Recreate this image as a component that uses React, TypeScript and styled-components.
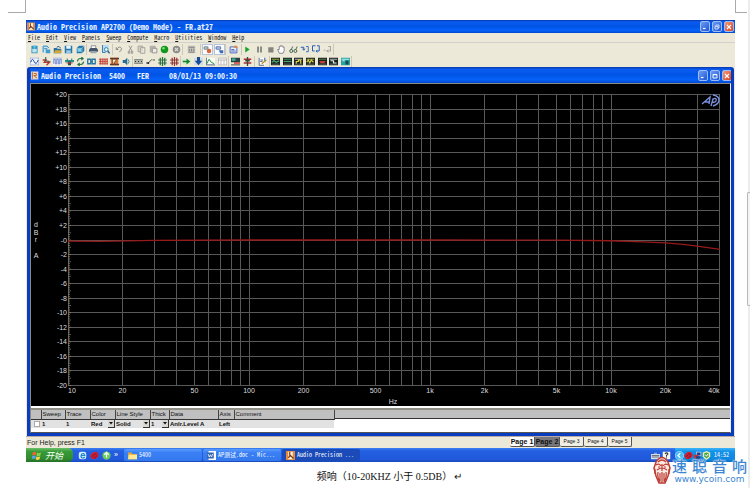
import React from "react";
import styled, { createGlobalStyle, css } from "styled-components";

const Global = createGlobalStyle`
  * { box-sizing: border-box; }
  body { margin: 0; background: #fff; font-family: "Liberation Sans", sans-serif; }
  button, select, input { font: inherit; color: inherit; margin: 0; padding: 0; border: 0; background: none; }
`;

const mono = `"Noto Sans Mono CJK SC", "Liberation Mono", monospace`;
const sans = `"Liberation Sans", "Noto Sans CJK SC", sans-serif`;

/* ---------- document page ---------- */

const Page = styled.div`
  display: grid;
  grid-template-columns: 1fr 3px;
  min-height: 100vh;
`;
const Sheet = styled.main`
  display: flex;
  flex-direction: column;
`;
const Margins = styled.div`
  display: flex;
  justify-content: space-between;
  height: 20px;
  padding-left: 8px;
`;
const Corner = styled.div<{ $side: "left" | "right" }>`
  width: ${(p) => (p.$side === "left" ? 18 : 12)}px;
  height: 13px;
  border-bottom: 1px solid #aaa;
  ${(p) => (p.$side === "left" ? "border-right" : "border-left")}: 1px solid #aaa;
`;
const Gutter = styled.div`
  border-right: 2px solid #ececec;
`;
const Thumb = styled.div`
  width: 3px;
  height: 114px;
  margin-top: 192px;
  border: 1px solid #b8b8b8;
  border-right: 0;
  border-radius: 2px 0 0 2px;
  background: #f4f4f4;
`;
const Figure = styled.figure`
  position: relative;
  margin: 0 12px 0 26px;
`;
const Caption = styled.figcaption`
  display: flex;
  justify-content: center;
  align-items: center;
  gap: 2px;
  height: 26px;
  padding: 3px 0 0 18px;
  font: 10px/14px "Liberation Serif", "Noto Sans CJK SC", serif;
  color: #111;
`;

/* ---------- application window ---------- */

const AppWindow = styled.section`
  background: #ece9d8;
`;
const TitleBar = styled.header<{ $child?: boolean }>`
  display: flex;
  align-items: center;
  gap: 2px;
  height: ${(p) => (p.$child ? 16 : 13)}px;
  padding: ${(p) => (p.$child ? "1px 2px 0 4px" : "0 1px")};
  background: linear-gradient(#0836a8, #0a5cf0 14%, #0054e4 50%, #0662fa 80%, #0048cc);
  color: #fff;
  > svg { width: 8px; }
`;
const Title = styled.h1`
  flex: 1;
  margin: 0;
  font: bold 8px/12px ${mono};
  color: #e8f0ff;
  white-space: pre;
`;
const WinButton = styled.button<{ $close?: boolean }>`
  display: grid;
  place-items: center;
  width: 10px;
  height: 11px;
  border: 1px solid #9dbcf5;
  border-radius: 2px;
  background: ${(p) => (p.$close ? "linear-gradient(135deg,#f09a7c,#d8421c)" : "linear-gradient(135deg,#6c9cf4,#1e56d8)")};
`;
const MenuBar = styled.nav`
  display: flex;
  align-items: center;
  gap: 6px;
  height: 10px;
  padding-left: 2px;
  border-bottom: 1px solid #d2d2cc;
`;
const MenuItem = styled.button`
  font: 6px/8px ${mono};
  color: #111;
  white-space: nowrap;
  &::first-letter { text-decoration: underline; }
`;
const ToolRow = styled.div`
  display: flex;
  align-items: center;
  height: 12px;
  padding-left: 3px;
`;
const Group = styled.div<{ $w: number }>`
  display: flex;
  align-items: center;
  justify-content: space-around;
  width: ${(p) => p.$w}px;
  height: 11px;
  border-right: 1px solid #cbc8b8;
`;
const ToolButton = styled.button<{ $on?: boolean }>`
  display: grid;
  place-items: center;
  width: 11px;
  height: 11px;
  ${(p) => p.$on && css`background: #fbfbfb; box-shadow: inset 0 0 0 1px #b5c4dc;`}
`;
const Glyph = styled.svg`
  display: block;
  width: 9px;
  height: 9px;
`;

/* ---------- graph window ---------- */

const Child = styled.section`
  margin: 0 1px;
  border: solid #0a3cc0;
  border-width: 0 3px 3px;
  border-radius: 3px 3px 0 0;
  overflow: hidden;
  background: #fff;
`;
const ChildHead = styled.div`
  margin: 0 -3px;
`;
const ChildBody = styled.div`
  border: 1px solid #8b8b86;
  border-right-color: #eee;
  border-bottom-color: #555;
`;
const Chart = styled.svg`
  display: block;
  width: 100%;
  height: auto;
  background: #000;
  font: 7px ${sans};
`;
const TraceArea = styled.div`
  height: 24px;
  margin-top: 2px;
  border-top: 2px solid #8f8f86;
  background: linear-gradient(#c0c0c0 8px, #333 8px, #333 9px, #fff 9px);
`;
const Traces = styled.table`
  width: 303px;
  border-collapse: collapse;
  table-layout: fixed;
  font: 6px/8px ${sans};
  color: #111;
`;
const Th = styled.th`
  height: 9px;
  padding: 0 0 0 1px;
  border-right: 1px solid #444;
  border-bottom: 1px solid #333;
  background: #c0c0c0;
  font-weight: normal;
  text-align: left;
  white-space: nowrap;
`;
const Td = styled.td`
  height: 8px;
  padding: 0 0 0 1px;
  background: #e2e2e2;
  font-weight: bold;
  white-space: nowrap;
`;
const Tick = styled.input`
  display: block;
  appearance: none;
  width: 6px;
  height: 6px;
  margin-left: 2px;
  border: 1px solid #aaa;
  background: #fff;
`;
const Picker = styled.label`
  display: flex;
  height: 8px;
`;
const Choice = styled.select`
  flex: 1;
  min-width: 0;
  appearance: none;
  line-height: 8px;
`;
const Arrow = styled.span`
  display: grid;
  place-items: center;
  width: 7px;
  height: 8px;
  border: 1px solid #333;
  border-width: 0 1px 1px 0;
  background: #d8d8d4;
`;

/* ---------- status bar and taskbar ---------- */

const StatusBar = styled.footer`
  display: flex;
  justify-content: space-between;
  height: 12px;
  padding: 0 103px 0 1px;
  border-top: 1px solid #b9a9a0;
  font: 7px/12px ${sans};
  color: #222;
`;
const Tabs = styled.div`
  display: flex;
  align-items: flex-start;
`;
const PageTab = styled.button<{ $look: "front" | "dark" | "plain" }>`
  width: ${(p) => (p.$look === "plain" ? 24 : 25)}px;
  height: 10px;
  border: solid #555;
  border-width: 0 1px 1px 0;
  border-radius: 0 0 2px 2px;
  background: ${(p) => (p.$look === "dark" ? "#77777c" : p.$look === "front" ? "#fff" : "#f1efe4")};
  color: #111;
  font: ${(p) => (p.$look === "plain" ? "5px" : "bold 7px")}/9px ${sans};
  white-space: nowrap;
`;
const TaskBar = styled.div`
  display: flex;
  align-items: stretch;
  height: 14px;
  background: linear-gradient(#3c80f4, #2460e0 20%, #2058dc 85%, #1a48b4);
  color: #fff;
`;
const Start = styled.button`
  display: flex;
  align-items: center;
  gap: 4px;
  width: 47px;
  padding-left: 6px;
  border-radius: 0 5px 5px 0;
  background: linear-gradient(#6cc06a, #389a38 25%, #318c31 75%, #247024);
  font: italic 9px/13px "Noto Sans CJK SC", sans-serif;
  color: #f2fff0;
`;
const Quick = styled.div`
  display: flex;
  align-items: center;
  gap: 3px;
  width: 51px;
  padding-left: 5px;
  font: 7px/10px ${sans};
`;
const Task = styled.button<{ $active?: boolean }>`
  display: flex;
  align-items: center;
  gap: 2px;
  width: 78px;
  margin: 1px 1px 1px 0;
  padding-left: 4px;
  border-radius: 2px;
  background: ${(p) => (p.$active ? "#1b4bb8" : "linear-gradient(#5a9cff, #3a80f4 30%, #3478ee)")};
  font: 6px/12px ${mono};
  white-space: pre;
`;
const Tray = styled.div`
  display: flex;
  align-items: center;
  margin-left: auto;
`;
const InputIcons = styled.div`
  display: flex;
  align-items: center;
  gap: 2px;
  padding-right: 4px;
`;
const Clock = styled.div`
  display: flex;
  align-items: center;
  align-self: stretch;
  width: 60px;
  padding-right: 2px;
  background: linear-gradient(#3cb4fa, #1292ea 25%, #0f86e0 85%, #0a68b8);
  font: 6px/8px ${mono};
`;
const Time = styled.time`
  margin-left: auto;
  padding-right: 4px;
`;

/* ---------- watermark ---------- */

const Watermark = styled.a`
  position: absolute;
  right: -12px;
  bottom: 4px;
  display: flex;
  align-items: flex-end;
  gap: 1px;
  color: #3c86d2;
  text-decoration: none;
`;
const Emblem = styled.svg`
  width: 18px;
  height: 28px;
`;
const Brand = styled.span`
  display: flex;
  flex-direction: column;
  align-items: center;
`;
const BrandName = styled.span`
  display: flex;
  gap: 5px;
  font: 500 15px/13px "Liberation Serif", "Noto Sans CJK SC", serif;
  text-shadow: 0 0 1px #fff, 0 0 2px #fff;
`;
const BrandUrl = styled.span`
  font: 9px/10px "DejaVu Sans", sans-serif;
  text-shadow: 0 0 1px #fff;
`;

/* ---------- icon drawings, on a 12 x 12 grid ---------- */

const box = (fill: string, x = 1, y = 2, w = 10, h = 8) => <rect x={x} y={y} width={w} height={h} fill={fill} />;
const line = (d: string, stroke: string, w = 1.3) => <path d={d} fill="none" stroke={stroke} strokeWidth={w} />;
const scope = (a: string, b: string, d: string) => (
  <>
    {box("#18201c", 0, 1, 12, 10)}
    {line("M1 3H11", a, 1)}
    {line(d, b, 1.6)}
    {line("M1 9.500H11", "#8b9b90", 0.8)}
  </>
);

const art: Record<string, React.ReactNode> = {
  newDoc: <>{box("#2c86b8", 2, 1, 8, 10)}{box("#b9e4f2", 3, 5, 6, 5)}{line("M6 0V5M3.500 2.500H8.500", "#5ccfe8")}</>,
  newTest: <>{box("#c9e7f5", 1, 1, 7, 9)}{line("M1.500 10V1.500H7L9 4", "#2f86bc")}{box("#3f9ccb", 5, 6, 6, 5)}{line("M3 5H7", "#3a78a8")}</>,
  open: <><path d="M1 4H5L6 5H11V11H1Z" fill="#2b6f9f" /><path d="M1 11L3 7H12L10 11Z" fill="#d6a83a" />{line("M5 3Q8 0 10 4", "#1b4f88")}</>,
  save: <>{box("#2579ae", 1, 1, 10, 10)}{box("#e8f4fa", 3, 1, 6, 4)}{box("#9fc9de", 3, 7, 6, 4)}</>,
  saveAll: <><path d="M1 4L4 1H11V8L8 11H1Z" fill="#1f74aa" />{box("#8cd0ec", 2, 5, 5, 4)}{line("M1 4.500H8V11M8 4.500L11 1", "#c2e6f4", 0.8)}</>,
  print: <>{box("#fff", 3, 1, 6, 4)}<path d="M0 6L2 4H10L12 6V9H0Z" fill="#455568" />{box("#9aa5b0", 2, 8, 8, 3)}{line("M3 5V1H9V5", "#556", 0.8)}</>,
  preview: <>{box("#b8dcf0", 2, 0, 8, 10)}{line("M2 0V10H6", "#3a7ba8")}<circle cx="7" cy="6" r="2.500" fill="#dff" stroke="#245b88" />{line("M9 8L11.500 11", "#245b88", 1.8)}</>,
  undo: line("M3 3V6H6M3 6Q8 0 10 5Q10 8 7 9", "#8a8a86"),
  cut: line("M4 1L8 8M8 1L4 8M3 8.500H5V11H3ZM7 8.500H9V11H7Z", "#8d8d88", 1.1),
  copy: <>{box("#dcdad0", 1, 1, 7, 8)}{line("M1.500 1.500H7.500V3M1.500 1.500V9H4M4.500 3.500H10.500V11H4.500Z", "#a5a39b")}</>,
  paste: <>{box("#b2b0a8", 1, 1, 8, 9)}{box("#ecebe4", 4, 4, 7, 7)}{line("M4.500 4.500H10.500V10.500H4.500Z", "#989690")}</>,
  go: <><circle cx="6" cy="6" r="5" fill="#12961c" /><circle cx="4.700" cy="4.300" r="1.800" fill="#72dc70" /></>,
  stop: <><circle cx="6" cy="6" r="5" fill="#8b8b88" />{line("M4 4L8 8M8 4L4 8", "#ddd", 1.5)}</>,
  binary: <>{box("#c2c1ba", 1, 1, 10, 10)}{line("M2 3H10M3 5V8M6 5V8M9 5V8M2 9.500H10", "#777", 1.1)}</>,
  linkRed: <>{box("#c5ccd4", 1, 2, 6, 4)}{line("M1.500 2.500H6.500V5.500H1.500Z", "#788")}<circle cx="8" cy="8" r="3" fill="#d8643a" /></>,
  linkBlue: <>{box("#c8d8ee", 1, 2, 6, 4)}{line("M1.500 2.500H7.500V5.500H1.500Z", "#5674a8")}<path d="M5 7H11V11H7Z" fill="#3c6cb8" /></>,
  panel: <>{box("#e6effc", 1, 2, 10, 9)}{line("M1.500 2.500H10.500V10.500H1.500ZM3 6H7M3 8H9", "#5266b8")}{box("#e08848", 7, 1, 4, 3)}</>,
  play: <path d="M3 2L9 6L3 10Z" fill="#18a428" />,
  pause: <>{box("#6a736e", 3, 2, 2, 8)}{box("#6a736e", 7, 2, 2, 8)}</>,
  square: box("#85857e", 3, 3, 7, 7),
  hand: <path d="M3 11L1 6L3 6V2H4.500V1H6V1.500H8V3H9.500V8L8 11Z" fill="#fff" stroke="#667" strokeWidth="1" />,
  glasses: line("M1 8A2 2 0 1 0 5 8A2 2 0 1 0 1 8M6.500 8A2 2 0 1 0 10.500 8A2 2 0 1 0 6.500 8M3 6L5 2M9 6L11 2", "#385844", 1.2),
  stepA: <>{line("M1 3H5V6M3.500 5L5 7L6.500 5", "#2558b0")}{line("M8 2H11V9H8", "#3f70c0")}</>,
  stepB: <>{line("M6 1H2V8H5", "#2c5cb8")}{line("M8 1H11V8H7L8.500 6.500M7 8L8.500 10", "#2c5cb8")}</>,
  stepC: line("M7 2H10V8H5L7 6M5 8L7 10M1 7H3", "#a0a09a"),
  wave: <>{box("#eef4ff", 0, 1, 12, 10)}{line("M0 1.500H12M0.500 1V11M11.500 1V11M0 10.500H12", "#8aa5cc", 0.8)}{line("M1 7Q3 0 5.500 6T11 4", "#2448b0")}</>,
  gen: <>{line("M1 4H5L3 7H10L6 11", "#b83a34", 1.8)}{line("M5 0V5L10 6", "#2b4a48")}</>,
  pulse: <>{box("#eef2ff", 0, 1, 12, 10)}{line("M1 9V3H3V9H5V3H7V9H9V3H11V9", "#4a6bbc", 1)}{line("M0 1.500H12", "#7e90bf", 0.8)}</>,
  meter: <>{box("#28968a", 0, 4, 12, 3)}{line("M3 2V5M9 2V5", "#267068")}{box("#214c56", 4, 6, 4, 5)}{line("M2 8H10", "#c04040")}</>,
  cycle: <>{line("M2 6Q2 2 6 2H9M7 0L9.500 2L7 4M10 6Q10 10 6 10H3M5 8L2.500 10L5 12", "#26784a", 1.5)}</>,
  dual: line("M1 3H5V9H1ZM7 3H11V9H7ZM0 6H1M5 6H7", "#2476a0", 1.7),
  bars: <>{box("#e8b4a8", 0, 2, 12, 8)}{line("M0 3H12M0 6H12M0 9H12M2 2V10M5 2V10M8 2V10M11 2V10", "#bc3f32", 1)}</>,
  filter: <>{box("#d6783c", 1, 1, 10, 10)}{line("M0 2H12M0 10H12", "#603a24", 2)}<path d="M3 3H9L6 7V10L4 9Z" fill="#fff3c8" stroke="#60301c" /></>,
  speaker: <><path d="M1 4H4L7 1V11L4 8H1Z" fill="#246f92" />{line("M8 3Q11 6 8 9", "#40838e")}</>,
  digits: <>{line("M0 3.500H12V8.500H0ZM4 3V9M8 3V9", "#62716a", 1)}{line("M2 5V7M6 5V7M10 5V7", "#222")}</>,
  switch: <>{line("M0 8H3L8 3M9 4H12", "#31483e", 1.2)}<circle cx="3" cy="8" r="1.300" fill="#214" /></>,
  mixGreen: <>{line("M3 1V11M6 0V12M9 1V11", "#217c3c", 1.7)}{line("M0 4H12M0 8H12", "#25563d", 1)}</>,
  mixRed: <>{line("M3 1V11M6 0V12M9 1V11", "#a83434", 1.7)}{line("M0 4H12M0 8H12", "#6d2828", 1)}</>,
  arrowRight: <>{box("#d9ead2", 0, 2, 12, 8)}<path d="M1 5H6V2L11 6L6 10V7H1Z" fill="#12852c" /></>,
  arrowDown: <>{box("#cddbe8", 0, 1, 12, 10)}<path d="M4 0H8V5H11L6 11L1 5H4Z" fill="#174c94" /></>,
  graph: <>{box("#f8fcf6", 0, 1, 12, 10)}{line("M0.500 1V10.500H12", "#568")}{line("M1 9L4 3L7 7L11 9", "#1e8c3a")}</>,
  table: <>{box("#fafafa", 0, 1, 12, 10)}{line("M0.500 1.500H11.500V10.500H0.500ZM0 4H12M4 4V10M8 4V10", "#999", 0.8)}</>,
  monitor: <>{box("#264242", 0, 1, 12, 6)}{box("#3eb0a0", 1, 2, 5, 3)}{box("#c43c34", 4, 7, 8, 2)}{line("M0 10.500H12", "#444")}</>,
  sweep: <>{line("M1 3H11M1 8H11", "#b02e2c", 2)}{line("M6 0V12M3 5H9", "#314844", 1.8)}</>,
  log: <>{box("#fff", 1, 1, 8, 10)}{line("M1.500 1V11H8M3 4H7M3 6H6", "#556a80")}{line("M5 9L11 4", "#bd8b1e", 1.7)}{line("M9 1V5", "#2b5aa8")}</>,
  scopeA: scope("#c8d84c", "#49b47c", "M1 7L4 5L7 7L11 5"),
  scopeB: scope("#4eb478", "#47a26e", "M1 6H11"),
  scopeC: scope("#eaeaea", "#e8d848", "M3 9V6H6V4H9V9"),
  scopeD: scope("#d4ce42", "#d8d24c", "M1 7L3 4L5 8L7 4L10 7"),
  scopeE: scope("#6a9a5c", "#cc3c34", "M2 6H10M3 7.500H9"),
  scopeF: scope("#e0e4e4", "#e4f4f4", "M2 5H6V8H10"),
  scopeG: <>{box("#28a3a2", 0, 1, 12, 10)}{line("M1 3H11M2 5H5", "#bdf4f0")}{box("#164b50", 6, 5, 4, 5)}</>,
  app: <>{box("#e9893c", 0, 0, 12, 12)}{box("#fff3dc", 3, 1, 6, 10)}{line("M5 1V8M3 9L6 6L10 10", "#7a3618", 1.6)}</>,
  doc: <>{box("#e8d9c8", 0, 0, 11, 12)}{line("M2 1V11M4 3H8V6H4L9 10", "#b46a38", 1.5)}</>,
  min: line("M2 9H7", "#fff", 2.4),
  restore: line("M4 4V2H10V8H8M2 5H8V10H2Z", "#fff", 1.4),
  max: line("M2 3H10V10H2ZM2 3.500H10", "#fff", 1.8),
  close: line("M2 2L10 10M10 2L2 10", "#fff", 2.2),
  flag: <><path d="M1 2Q3 0 5.500 2L5 6Q3 4 0 6Z" fill="#ef6234" /><path d="M6.500 2Q9 4 12 2L11 6Q8 8 6 6Z" fill="#8cd04c" /><path d="M0 7Q3 5 5 7L4 11Q2 9 0 11Z" fill="#58a0f4" /><path d="M6 7Q8 9 11 7L10 11Q7 13 5 11Z" fill="#f8d648" /></>,
  ie: <><rect x="1" y="1" width="10" height="10" rx="3" fill="#d5efff" />{line("M4 6H9Q8 2 5 4Q3 7 5 9Q7 10 9 8", "#2384cc", 1.5)}</>,
  red: <><ellipse cx="6" cy="6" rx="5.500" ry="4.500" fill="#d51e2c" transform="rotate(-25 6 6)" />{line("M3 8Q5 3 9 4M5 9Q8 9 9 6", "#6d1740", 1.2)}</>,
  green: <><circle cx="6" cy="6" r="5.500" fill="#6cc85c" />{line("M6 2V9M3 5L6 2L9 5", "#f0fff0", 1.7)}</>,
  folder: <><path d="M0 2H5L6 4H12V11H0Z" fill="#d9a83c" /><path d="M1 5H12V11H0Z" fill="#ffe994" /></>,
  word: <>{box("#fff", 2, 0, 10, 12)}{box("#3466b4", 0, 2, 9, 8)}{line("M1.500 4L3 8L4.500 5L6 8L7.500 4", "#fff", 1)}</>,
  keyboard: <>{box("#d8dce4", 0, 4, 12, 7)}{line("M1 6H11M1 8H11", "#46536a", 1)}{line("M4 3H8", "#ccd", 1)}</>,
  help: <>{box("#f8f8f0", 1, 1, 10, 10)}{line("M4 4Q6 1 8 4L6 6V7.500M6 8.500V10", "#333", 1.4)}</>,
  chevron: <><circle cx="6" cy="6" r="5.500" fill="#43b8f6" stroke="#a8e0ff" />{line("M7 3L4 6L7 9", "#fff", 1.8)}</>,
  net: <>{box("#c8d5e8", 4, 1, 7, 6)}{box("#213f88", 5, 2, 5, 4)}{box("#b13844", 1, 5, 6, 5)}{box("#20408c", 4, 7, 6, 4)}</>,
  shield: <><path d="M6 0L11 2V7Q10 10 6 12Q2 10 1 7V2Z" fill="#e6f0b0" /><path d="M6 2L9 3V7L6 10L3 7V3Z" fill="#48a34c" />{line("M4.500 5L6 7L8 4", "#fff")}</>,
  drop: <path d="M2 4H10L6 9Z" fill="#111" />,
};

const Icon = ({ name }: { name: string }) => (
  <Glyph viewBox="0 0 12 12" aria-hidden="true">{art[name]}</Glyph>
);
const SmallGlyph = styled.svg`
  display: block;
  width: 6px;
  height: 6px;
`;
const Small = ({ name }: { name: string }) => (
  <SmallGlyph viewBox="0 0 12 12" aria-hidden="true">{art[name]}</SmallGlyph>
);

/* ---------- data ---------- */

type ToolGroup = { w: number; icons: string[] };
const topTools: ToolGroup[] = [
  { w: 58, icons: ["newDoc", "newTest", "open", "save", "saveAll"] },
  { w: 26, icons: ["print", "preview"] },
  { w: 70, icons: ["undo", "cut", "copy", "paste", "go", "stop"] },
  { w: 18, icons: ["binary"] },
  { w: 25, icons: ["linkRed", "linkBlue"] },
  { w: 16, icons: ["panel"] },
  { w: 92, icons: ["play", "pause", "square", "hand", "glasses", "stepA", "stepB", "stepC"] },
];
const lowTools: ToolGroup[] = [
  { w: 104, icons: ["wave", "gen", "pulse", "meter", "cycle", "dual", "bars", "filter", "speaker"] },
  { w: 48, icons: ["digits", "switch", "mixGreen", "mixRed"] },
  { w: 48, icons: ["arrowRight", "arrowDown", "graph", "table"] },
  { w: 26, icons: ["monitor", "sweep"] },
  { w: 15, icons: ["log"] },
  { w: 82, icons: ["scopeA", "scopeB", "scopeC", "scopeD", "scopeE", "scopeF", "scopeG"] },
];
const menus = ["File", "Edit", "View", "Panels", "Sweep", "Compute", "Macro", "Utilities", "Window", "Help"];
const columns: [string, number][] = [
  ["", 10], ["Sweep", 24], ["Trace", 25], ["Color", 25], ["Line Style", 35],
  ["Thick", 19], ["Data", 49], ["Axis", 16], ["Comment", 100],
];

/* ---------- chart ---------- */

const left = 37, right = 689, top = 10.5, bottom = 301.5;
const fx = (hz: number) => left + 181 * Math.log10(hz / 10);
const fy = (db: number) => top + ((20 - db) / 40) * (bottom - top);
const freqs = [10, 100, 1000, 10000]
  .flatMap((d) => [1, 2, 3, 4, 5, 6, 7, 8, 9].map((n) => n * d))
  .filter((f) => f < 40000);
const levels = Array.from({ length: 21 }, (_, i) => 20 - i * 2);
const marks: [number, string][] = [
  [10, "10"], [20, "20"], [50, "50"], [100, "100"], [200, "200"], [500, "500"], [1000, "1k"],
  [2000, "2k"], [5000, "5k"], [10000, "10k"], [20000, "20k"], [40000, "40k"],
];
const nudge = (f: number) => (f === 10 ? 4 : f === 40000 ? -6 : 0);
const levelText = (v: number) => (v > 0 ? `+${v}` : v === 0 ? "-0" : `${v}`);
const response: [number, number][] = [
  [10, -0.15], [15, -0.2], [30, -0.05], [100, 0], [1000, 0], [5000, -0.02], [10000, -0.1],
  [15000, -0.25], [20000, -0.4], [25000, -0.6], [30000, -0.85], [40000, -1.3],
];

const ResponseChart = () => (
  <Chart viewBox="0 0 699 322" role="img" aria-label="Frequency response">
    <g stroke="#585858" strokeWidth="1">
      {freqs.map((f) => <line key={f} x1={Math.floor(fx(f)) + 0.5} x2={Math.floor(fx(f)) + 0.5} y1={top} y2={bottom} />)}
      {levels.map((v) => <line key={v} x1={left} x2={right} y1={Math.floor(fy(v)) + 0.5} y2={Math.floor(fy(v)) + 0.5} />)}
      <line x1={right - 0.5} x2={right - 0.5} y1={top} y2={bottom} />
    </g>
    <g stroke="#8a8472" strokeWidth="0.7">
      {Array.from({ length: 161 }, (_, i) => (
        <line key={i} x1={left} x2={left + (i % 4 ? 2 : 3)} y1={fy(20 - i / 4)} y2={fy(20 - i / 4)} />
      ))}
    </g>
    <polyline points={response.map(([f, v]) => `${fx(f)},${fy(v)}`).join(" ")} fill="none" stroke="#961a1a" strokeWidth="1.3" />
    <g fill="#dedede">
      {levels.map((v) => <text key={v} x="36" y={fy(v) + 2.5} textAnchor="end">{levelText(v)}</text>)}
      {marks.map(([f, t]) => <text key={t} x={fx(f) + nudge(f)} y="309" textAnchor="middle">{t}</text>)}
      <text x="362" y="320" textAnchor="middle">Hz</text>
      {([["d", 143], ["B", 151], ["r", 158], ["A", 174]] as [string, number][]).map(([t, y]) => (
        <text key={t} x="5" y={y} textAnchor="middle">{t}</text>
      ))}
    </g>
    <g fill="none" stroke="#7890dc" strokeWidth="1.4">
      <path d="M671 20L679 13L678 20M674 18H678" />
      <path d="M680 22L682 15Q686 13 685 17Q684 19 681 18" />
      <path d="M682 11Q688 12 688 16Q688 20 682 22" />
    </g>
  </Chart>
);

const Tools = ({ groups }: { groups: ToolGroup[] }) => (
  <ToolRow role="toolbar">
    {groups.map((g) => (
      <Group key={g.icons[0]} $w={g.w}>
        {g.icons.map((n) => (
          <ToolButton key={n} type="button" aria-label={n} $on={n === "linkRed" || n === "linkBlue"}>
            <Icon name={n} />
          </ToolButton>
        ))}
      </Group>
    ))}
  </ToolRow>
);

const WindowControls = ({ middle }: { middle: "restore" | "max" }) => (
  <>
    <WinButton type="button" aria-label="Minimize"><Small name="min" /></WinButton>
    <WinButton type="button" aria-label="Resize"><Small name={middle} /></WinButton>
    <WinButton type="button" aria-label="Close" $close><Small name="close" /></WinButton>
  </>
);

const Dropdown = ({ label, value }: { label: string; value: string }) => (
  <Picker>
    <Choice aria-label={label} defaultValue={value}><option>{value}</option></Choice>
    <Arrow><Small name="drop" /></Arrow>
  </Picker>
);

export default function App() {
  return (
    <>
      <Global />
      <Page>
        <Sheet>
          <Margins><Corner $side="left" /><Corner $side="right" /></Margins>
          <Figure>
            <AppWindow>
              <TitleBar>
                <Icon name="app" />
                <Title>Audio Precision AP2700 (Demo Mode) - FR.at27</Title>
                <WindowControls middle="restore" />
              </TitleBar>
              <MenuBar>{menus.map((m) => <MenuItem key={m} type="button">{m}</MenuItem>)}</MenuBar>
              <Tools groups={topTools} />
              <Tools groups={lowTools} />
              <Child>
                <ChildHead>
                  <TitleBar $child>
                    <Icon name="doc" />
                    <Title as="h2">{"Audio Precision  5400   FER     08/01/13 09:00:30"}</Title>
                    <WindowControls middle="max" />
                  </TitleBar>
                </ChildHead>
                <ChildBody>
                  <ResponseChart />
                  <TraceArea>
                    <Traces>
                      <colgroup>{columns.map(([n, w]) => <col key={n} width={w} />)}</colgroup>
                      <thead><tr>{columns.map(([n]) => <Th key={n} scope="col">{n}</Th>)}</tr></thead>
                      <tbody>
                        <tr>
                          <Td><Tick type="checkbox" aria-label="Show trace" /></Td>
                          <Td>1</Td>
                          <Td>1</Td>
                          <Td><Dropdown label="Color" value="Red" /></Td>
                          <Td><Dropdown label="Line Style" value="Solid" /></Td>
                          <Td><Dropdown label="Thick" value="1" /></Td>
                          <Td>Anlr.Level A</Td>
                          <Td>Left</Td>
                          <Td />
                        </tr>
                      </tbody>
                    </Traces>
                  </TraceArea>
                </ChildBody>
              </Child>
              <StatusBar>
                <span>For Help, press F1</span>
                <Tabs>
                  <PageTab type="button" $look="front">Page 1</PageTab>
                  <PageTab type="button" $look="dark">Page 2</PageTab>
                  <PageTab type="button" $look="plain">Page 3</PageTab>
                  <PageTab type="button" $look="plain">Page 4</PageTab>
                  <PageTab type="button" $look="plain">Page 5</PageTab>
                </Tabs>
              </StatusBar>
            </AppWindow>
            <TaskBar>
              <Start type="button"><Icon name="flag" />开始</Start>
              <Quick><Icon name="ie" /><Icon name="red" /><Icon name="green" /><span>»</span></Quick>
              <Task type="button"><Icon name="folder" />5400</Task>
              <Task type="button"><Icon name="word" />AP测试.doc - Mic...</Task>
              <Task type="button" $active><Icon name="app" />Audio Precision ...</Task>
              <Tray>
                <InputIcons><Icon name="keyboard" /><Icon name="help" /></InputIcons>
                <Clock>
                  <Icon name="chevron" /><Icon name="red" /><Icon name="net" /><Icon name="shield" />
                  <Time>14:52</Time>
                </Clock>
              </Tray>
            </TaskBar>
            <Caption><span>频响（10-20KHZ 小于 0.5DB）</span><span>↵</span></Caption>
            <Watermark href="#ycoin">
              <Emblem viewBox="0 0 18 28" aria-hidden="true">
                <path d="M3 6Q9 -3 15 6L17 12L15 20L12 27H6L3 20L1 12Z" fill="#fbeae4" stroke="#bd3c34" strokeWidth="1.500" />
                <path d="M5 6Q9 2 13 6M3 9Q6 7 8 10M10 10Q12 7 15 9M9 8V15M5 11H7M11 11H13M4 14Q9 10 14 14M5 16Q4 21 7 26M7 17V25M9 16V27M11 17V25M13 16Q14 21 11 26M2 13V18M16 13V18" fill="none" stroke="#bd3c34" strokeWidth="1.200" />
              </Emblem>
              <Brand>
                <BrandName>{[..."速聪音响"].map((c) => <span key={c}>{c}</span>)}</BrandName>
                <BrandUrl>www.ycoin.com</BrandUrl>
              </Brand>
            </Watermark>
          </Figure>
        </Sheet>
        <Gutter><Thumb /></Gutter>
      </Page>
    </>
  );
}
